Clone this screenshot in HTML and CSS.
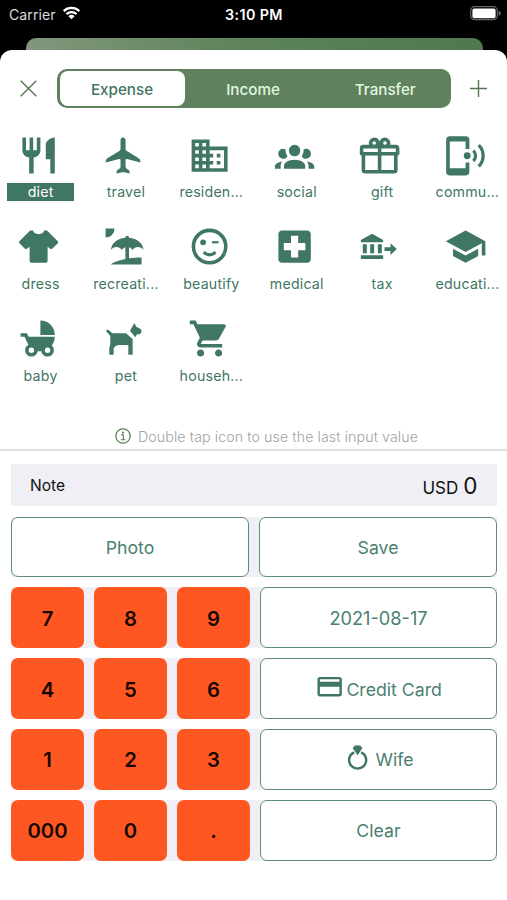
FILE: index.html
```html
<!DOCTYPE html>
<html lang="en">
<head>
<meta charset="utf-8">
<meta name="viewport" content="width=device-width, initial-scale=1">
<title>New expense</title>
<link rel="stylesheet" href="styles.css">
</head>
<body>
<header class="status">
  <div class="carrier"><span>Carrier</span>
    <svg class="wifi" viewBox="0 0 18 14"><path d="M1.2 5.1a11.2 11.2 0 0 1 15.6 0M4 8.1a7.2 7.2 0 0 1 10 0" fill="none" stroke="#fff" stroke-width="2.3"/><path d="M5.9 10.2a4.5 4.5 0 0 1 6.2 0L9 13.3z" fill="#fff"/></svg>
  </div>
  <span class="clock">3:10 PM</span>
  <svg class="battery" viewBox="0 0 31 15"><rect x=".7" y=".7" width="26.6" height="13" rx="4" fill="none" stroke="#666" stroke-width="1.2"/><rect x="2.4" y="2.4" width="23.2" height="9.8" rx="2" fill="#fff"/><path d="M28.7 4.7q2 .8 2 2.5t-2 2.5z" fill="#777"/></svg>
</header>
<div class="backdrop"></div>
<main class="sheet">
  <nav class="topbar">
    <svg class="close" viewBox="0 0 17 17"><path d="M.7.7l15.6 15.6M16.3.7L.7 16.3"/></svg>
    <div class="segments"><span class="segment selected">Expense</span><span class="segment">Income</span><span class="segment">Transfer</span></div>
    <svg class="add" viewBox="0 0 17 17"><path d="M8.5 0v17M0 8.5h17"/></svg>
  </nav>

  <section class="categories">
    <div class="category active"><svg viewBox="0 0 24 24"><path d="M11 9H9V2H7v7H5V2H3v7c0 2.12 1.66 3.84 3.75 3.97V22h2.5v-9.03C11.34 12.84 13 11.12 13 9V2h-2v7zm5-3v8h2.5v8H21V2c-2.76 0-5 2.24-5 4z"/></svg><span>diet</span></div>
    <div class="category"><svg viewBox="0 0 24 24"><path d="M13.1 3.6C13.1 2.7 12.6 2 11.7 2s-1.4.7-1.4 1.6v4.7q0 .7-.7 1.1L3 13.5q-.9.6-.9 1.5v.9l7.4-2q.8-.1.8.7v3.6q0 .6-.5 1l-1.4 1q-.3.3-.3.7V22l3.6-.9 3.6.9v-1.1q0-.4-.3-.7l-1.4-1q-.5-.4-.5-1v-3.6q0-.8.8-.7l7.4 2V15q0-.9-.9-1.5l-6.6-4.1q-.7-.4-.7-1.1z"/></svg><span>travel</span></div>
    <div class="category"><svg viewBox="0 0 24 24"><path d="M12 7V3H2v18h20V7H12zM6 19H4v-2h2v2zm0-4H4v-2h2v2zm0-4H4V9h2v2zm0-4H4V5h2v2zm4 12H8v-2h2v2zm0-4H8v-2h2v2zm0-4H8V9h2v2zm0-4H8V5h2v2zm10 12h-8v-2h2v-2h-2v-2h2v-2h-2V9h8v10zm-2-8h-2v2h2v-2zm0 4h-2v2h2v-2z"/></svg><span>residen...</span></div>
    <div class="category"><svg viewBox="0 0 24 24"><path transform="translate(1.08 .85) scale(.91 .925)" d="M12,5.5A3.5,3.5 0 0,1 15.5,9A3.5,3.5 0 0,1 12,12.5A3.5,3.5 0 0,1 8.5,9A3.5,3.5 0 0,1 12,5.5M5,8C5.56,8 6.08,8.15 6.53,8.42C6.38,9.85 6.8,11.27 7.66,12.38C7.16,13.34 6.16,14 5,14A3,3 0 0,1 2,11A3,3 0 0,1 5,8M19,8A3,3 0 0,1 22,11A3,3 0 0,1 19,14C17.84,14 16.84,13.34 16.34,12.38C17.2,11.27 17.62,9.85 17.47,8.42C17.92,8.15 18.44,8 19,8M5.5,18.25C5.5,16.18 8.41,14.5 12,14.5C15.59,14.5 18.5,16.18 18.5,18.25V20H5.5V18.25M0,20V18.5C0,17.11 1.89,15.94 4.45,15.6C3.86,16.28 3.5,17.22 3.5,18.25V20H0M24,20H20.5V18.25C20.5,17.22 20.14,16.28 19.55,15.6C22.11,15.94 24,17.11 24,18.5V20Z"/></svg><span>social</span></div>
    <div class="category"><svg viewBox="0 0 24 24"><path d="M22,12V20A2,2 0 0,1 20,22H4A2,2 0 0,1 2,20V12A1,1 0 0,1 1,11V8A2,2 0 0,1 3,6H6.17C6.06,5.69 6,5.35 6,5A3,3 0 0,1 9,2C10,2 10.88,2.5 11.43,3.24V3.23L12,4L12.57,3.23V3.24C13.12,2.5 14,2 15,2A3,3 0 0,1 18,5C18,5.35 17.94,5.69 17.83,6H21A2,2 0 0,1 23,8V11A1,1 0 0,1 22,12M4,20H11V12H4V20M20,20V12H13V20H20M9,4A1,1 0 0,0 8,5A1,1 0 0,0 9,6A1,1 0 0,0 10,5A1,1 0 0,0 9,4M15,4A1,1 0 0,0 14,5A1,1 0 0,0 15,6A1,1 0 0,0 16,5A1,1 0 0,0 15,4M3,8V10H11V8H3M13,8V10H21V8H13Z"/></svg><span>gift</span></div>
    <div class="category"><svg viewBox="0 0 24 24"><path d="M3.2 1.2h8.9q2 0 2 2v5.1H12V4.2H3.2V19H12v-3.2h2.1V21q0 2-2 2H3.2q-2 0-2-2V3.2q0-2 2-2z"/><circle cx="12.9" cy="12.1" r="1.9"/><path d="M16.3 9.2a4 4 0 0 1 0 5.8M19.3 6.2a8.3 8.3 0 0 1 0 11.8" fill="none" stroke="currentColor" stroke-width="1.8"/></svg><span>commu...</span></div>

    <div class="category"><svg viewBox="0 0 24 24"><path d="M16,21H8A1,1 0 0,1 7,20V12.07L5.7,13.07C5.31,13.46 4.68,13.46 4.29,13.07L1.46,10.29C1.07,9.9 1.07,9.27 1.46,8.88L7.34,3H9C9,4.1 10.34,5 12,5C13.66,5 15,4.1 15,3H16.66L22.54,8.88C22.93,9.27 22.93,9.9 22.54,10.29L19.71,13.12C19.32,13.5 18.69,13.5 18.3,13.12L17,12.12V20A1,1 0 0,1 16,21"/></svg><span>dress</span></div>
    <div class="category"><svg viewBox="0 0 24 24"><path d="M15,18.54C17.13,18.21 19.5,18 22,18V22H5C5,21.35 8.2,19.86 13,18.9V12.4C12.16,12.65 11.45,13.21 11,13.95C10.39,12.93 9.27,12.25 8,12.25C6.73,12.25 5.61,12.93 5,13.95C5.03,10.37 8.5,7.43 13,7.04V7A1,1 0 0,1 14,6A1,1 0 0,1 15,7V7.04C19.5,7.43 22.96,10.37 23,13.95C22.39,12.93 21.27,12.25 20,12.25C18.73,12.25 17.61,12.93 17,13.95C16.55,13.21 15.84,12.65 15,12.39V18.54M7,2A5,5 0 0,1 2,7V2H7Z"/></svg><span>recreati...</span></div>
    <div class="category"><svg viewBox="0 0 24 24"><circle cx="12" cy="12" r="9" fill="none" stroke="currentColor" stroke-width="2"/><circle cx="8.4" cy="9.6" r="1.6"/><path d="M13.3 9.6H17" fill="none" stroke="currentColor" stroke-width="1.2"/><path d="M8.7 15.1q3.3 3 6.6 0" fill="none" stroke="currentColor" stroke-width="1.7"/></svg><span>beautify</span></div>
    <div class="category"><svg viewBox="0 0 24 24"><path d="M19 3H5c-1.1 0-1.99.9-1.99 2L3 19c0 1.1.9 2 2 2h14c1.1 0 2-.9 2-2V5c0-1.1-.9-2-2-2zm-1 11h-4v4h-4v-4H6v-4h4V6h4v4h4v4z"/></svg><span>medical</span></div>
    <div class="category"><svg viewBox="317.5 32 129.6 129.6"><path d="M360 58l33 19v7h-67v-7zM332 90h12v27h-12zM354 90h12v27h-12zM377 90h12v27h-12zM326 123h67v11h-67zM397 99h18V87l19 17-19 18v-12h-18z"/></svg><span>tax</span></div>
    <div class="category"><svg viewBox="0 0 24 24"><path d="M12,3L1,9L12,15L21,10.09V17H23V9M5,13.18V17.18L12,21L19,17.18V13.18L12,17L5,13.18Z"/></svg><span>educati...</span></div>

    <div class="category"><svg viewBox="0 0 24 24"><path d="M13,2V10H21A8,8 0 0,0 13,2M19.32,15.89C20.37,14.54 21,12.84 21,11H6.44L5.49,9H2V11H4.22C4.22,11 6.11,15.07 6.34,15.42C5.24,16 4.5,17.17 4.5,18.5A3.5,3.5 0 0,0 8,22C9.76,22 11.22,20.7 11.46,19H13.54C13.78,20.7 15.24,22 17,22A3.5,3.5 0 0,0 20.5,18.5C20.5,17.46 20.04,16.53 19.32,15.89M8,20A1.5,1.5 0 0,1 6.5,18.5A1.5,1.5 0 0,1 8,17A1.5,1.5 0 0,1 9.5,18.5A1.5,1.5 0 0,1 8,20M17,20A1.5,1.5 0 0,1 15.5,18.5A1.5,1.5 0 0,1 17,17A1.5,1.5 0 0,1 18.5,18.5A1.5,1.5 0 0,1 17,20Z"/></svg><span>baby</span></div>
    <div class="category"><svg viewBox="306 37 129.6 129.6"><path d="M318 79q3-5 8-3l11 10h41l20 17v47h-13v-29h-29q-11 1-15 9v20h-13v-21l3-11V94zM390 78l13-23 6 11 14 8 2 7-5 8h-9l-5 9z"/></svg><span>pet</span></div>
    <div class="category"><svg viewBox="0 0 24 24"><path d="M7 18c-1.1 0-1.99.9-1.99 2S5.9 22 7 22s2-.9 2-2-.9-2-2-2zM1 2v2h2l3.6 7.59-1.35 2.45c-.16.28-.25.61-.25.96 0 1.1.9 2 2 2h12v-2H7.42c-.14 0-.25-.11-.25-.25l.03-.12.9-1.63h7.45c.75 0 1.41-.41 1.75-1.03l3.58-6.49c.08-.14.12-.31.12-.48 0-.55-.45-1-1-1H5.21l-.94-2H1zm16 16c-1.1 0-1.99.9-1.99 2s.89 2 1.99 2 2-.9 2-2-.9-2-2-2z"/></svg><span>househ...</span></div>
  </section>

  <p class="hint"><svg viewBox="0 0 16 16"><circle cx="8" cy="8" r="7.2" fill="none" stroke="currentColor" stroke-width="1.2"/><circle cx="8" cy="4.5" r="1.05"/><path d="M6.2 6.9h2.2v4.6M6 11.7h4.3" fill="none" stroke="currentColor" stroke-width="1.1"/></svg><span>Double tap icon to use the last input value</span></p>

  <section class="entry">
    <div class="note"><span>Note</span><span class="amount"><span class="currency">USD</span><span class="value">0</span></span></div>
    <div class="row halves"><button class="action">Photo</button><button class="action">Save</button></div>
    <div class="row"><button class="key">7</button><button class="key">8</button><button class="key">9</button><button class="action date">2021-08-17</button></div>
    <div class="row"><button class="key">4</button><button class="key">5</button><button class="key">6</button><button class="action"><svg class="card" viewBox="0 0 24 24"><path d="M20 4H4c-1.11 0-1.99.89-1.99 2L2 18c0 1.11.89 2 2 2h16c1.11 0 2-.89 2-2V6c0-1.11-.89-2-2-2zm0 14H4v-6h16v6zm0-10H4V6h16v2z"/></svg><span>Credit Card</span></button></div>
    <div class="row"><button class="key">1</button><button class="key">2</button><button class="key">3</button><button class="action"><svg class="ring" viewBox="0 0 24 24"><path d="M12,10L8,4.4L9.6,2H14.2L15.8,4.4L12,10M15.5,6.8L14.3,8.5C16.5,9.4 18,11.5 18,14A6,6 0 0,1 12,20A6,6 0 0,1 6,14C6,11.5 7.6,9.4 9.7,8.5L8.5,6.8C5.8,8.1 4,10.8 4,14A8,8 0 0,0 12,22A8,8 0 0,0 20,14C20,10.8 18.2,8.1 15.5,6.8Z"/></svg><span>Wife</span></button></div>
    <div class="row"><button class="key">000</button><button class="key">0</button><button class="key">.</button><button class="action">Clear</button></div>
  </section>
</main>
</body>
</html>
```
FILE: styles.css
```css
* { box-sizing: border-box; }
body {
  margin: 0;
  height: 900px;
  overflow: hidden;
  background: #000;
  font-family: Inter, "Liberation Sans", sans-serif;
  color: #3f7664;
}
svg { display: block; fill: currentColor; flex: none; }

.status {
  height: 38px;
  padding: 0 6px 10px 9px;
  display: grid;
  grid-template-columns: 1fr auto 1fr;
  align-items: center;
  color: #fff;
  font-size: 14px;
}
.carrier { display: flex; align-items: center; gap: 6px; color: #ddd; }
.carrier span { letter-spacing: .1px; }
.wifi { width: 19px; height: 14px; margin-top: -2px; }
.clock { font-weight: 600; font-size: 14.3px; letter-spacing: .4px; margin-left: -2px; }
.battery { width: 31px; height: 15px; justify-self: end; margin-top: -1px; }
.backdrop {
  height: 12px;
  margin: 0 24.5px 0 25.5px;
  border-radius: 10px 10px 0 0;
  background: linear-gradient(90deg, #82977c, #5f845c 45%, #50774d);
}
.sheet { height: 850px; background: #fff; border-radius: 12px 12px 0 0; }

.topbar { display: flex; align-items: center; padding: 19.4px 19px 0 20px; }
.close, .add { width: 17px; height: 17px; stroke: #547650; stroke-width: 1.4; fill: none; }
.segments {
  width: 394px;
  height: 39px;
  margin: 0 19px 0 20px;
  padding: 2px 2px 2px 2.5px;
  display: grid;
  grid-template-columns: 125px 137px 1fr;
  border-radius: 10px;
  background: #5f815e;
}
.segment {
  display: flex;
  align-items: center;
  justify-content: center;
  padding-top: 1px;
  color: #e2f7e0;
  font-size: 15.2px;
  font-weight: 500;
}
.segment.selected { background: #fff; border-radius: 8px; color: #3f7664; }

.categories {
  height: 275px;
  margin-top: 25.4px;
  padding-left: 7px;
  display: grid;
  grid-template-columns: repeat(6, 67.2px);
  grid-auto-rows: 91.7px;
  column-gap: 18.2px;
}
.category { display: flex; flex-direction: column; align-items: center; }
.category svg { width: 43.2px; height: 43.2px; margin-right: 4.4px; }
.category span {
  width: 100%;
  height: 17.5px;
  margin-top: 6.5px;
  font-size: 14.2px;
  line-height: 18px;
  letter-spacing: .2px;
  text-align: center;
  white-space: nowrap;
}
.category.active span { background: #3f7664; color: #fff; }

.hint {
  height: 42.7px;
  margin: 0;
  padding: 14px 0 0 26px;
  border-bottom: 2px solid #dfe2df;
  display: flex;
  justify-content: center;
  align-items: center;
  gap: 7px;
  color: #a2a2a2;
  font-size: 14.2px;
  font-weight: 300;
  letter-spacing: .1px;
}
.hint svg { width: 16px; height: 16px; color: #547a54; }

.entry {
  margin: 12.5px 10px 0 11px;
  display: flex;
  flex-direction: column;
  gap: 10.2px;
}
.note {
  height: 42.5px;
  padding: 0 19.5px 0 19px;
  display: flex;
  align-items: center;
  justify-content: space-between;
  background: #f0eff5;
  color: #111;
  font-size: 15.6px;
}
.amount { display: flex; align-items: baseline; gap: 5px; }
.currency { font-size: 17px; }
.value { font-size: 22.5px; }
.row {
  height: 60.65px;
  display: grid;
  grid-template-columns: 73px 73px 73px 1fr;
  gap: 10px;
  background: #f0eff5;
}
.row.halves { grid-template-columns: 1fr 1fr; }
button {
  margin: 0;
  padding: 1px 0 0;
  border: 0;
  border-radius: 7px;
  font-family: inherit;
  display: flex;
  align-items: center;
  justify-content: center;
}
.key { background: #ff5722; color: #160700; font-size: 20.3px; font-weight: 600; }
.action {
  background: #fff;
  border: 1.4px solid #5f8d7b;
  color: #4a8070;
  font-size: 17.7px;
}
.date { font-size: 18.2px; }
.action svg { color: #3f7664; width: 29.3px; height: 29.3px; margin-top: -4px; }
.card { margin-right: 2px; }
.ring { margin-right: 3px; }
```
